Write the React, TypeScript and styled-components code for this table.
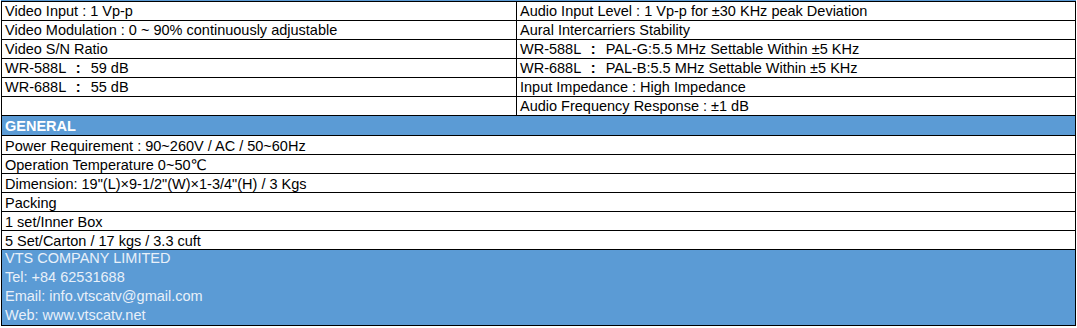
import React from "react";
import styled, { createGlobalStyle } from "styled-components";

const Global = createGlobalStyle`
  html, body { margin: 0; padding: 0; background: #ffffff; }
  body { font-family: "Liberation Sans", "DejaVu Sans", Arial, sans-serif; }
`;

const BLUE = "#5b9bd5";

const Page = styled.div`
  width: 1077px;
  height: 328px;
  background: #ffffff;
  display: flex;
  flex-direction: column;
`;

const TopStrip = styled.div`
  height: 1px;
  width: 1075px;
  margin-left: 1px;
  background: ${BLUE};
`;

const Sheet = styled.div`
  margin-left: 1px;
  width: 1075px;
  box-sizing: border-box;
  border: 1px solid #000;
  display: flex;
  flex-direction: column;
  color: #000;
  font-size: 14.5px;
`;

const TwoCol = styled.div`
  display: grid;
  grid-template-columns: 514px 1fr;
`;

const Cell = styled.div<{ $right?: boolean }>`
  height: 18px;
  line-height: 19px;
  padding-left: 3px;
  white-space: pre;
  overflow: hidden;
  border-bottom: 1px solid #000;
  border-left: ${(p) => (p.$right ? "1px solid #000" : "none")};
`;

const Colon = styled.span`
  font-weight: 700;
  padding: 0 2px;
`;

const Row = styled.div<{ $band?: boolean }>`
  height: ${(p) => (p.$band ? "19px" : "18px")};
  line-height: 20px;
  padding-left: 3px;
  white-space: pre;
  overflow: hidden;
  background: ${(p) => (p.$band ? BLUE : "#fff")};
  color: ${(p) => (p.$band ? "#ffffff" : "#000")};
  font-weight: ${(p) => (p.$band ? 700 : 400)};
  border-bottom: 1px solid #000;
`;

const Contact = styled.div`
  background: ${BLUE};
  color: #e8f0f9;
  padding-left: 3px;
  display: flex;
  flex-direction: column;
  gap: 1px;
`;

const ContactLine = styled.div`
  height: 18px;
  line-height: 17px;
  white-space: pre;
  overflow: hidden;
`;

type Spec = { a: string; b?: string };

const left: Spec[] = [
  { a: "Video Input : 1 Vp-p" },
  { a: "Video Modulation : 0 ~ 90% continuously adjustable" },
  { a: "Video S/N Ratio" },
  { a: "WR-588L  ", b: "  59 dB" },
  { a: "WR-688L  ", b: "  55 dB" },
  { a: "" },
];

const right: Spec[] = [
  { a: "Audio Input Level : 1 Vp-p for ±30 KHz peak Deviation" },
  { a: "Aural Intercarriers Stability" },
  { a: "WR-588L  ", b: "  PAL-G:5.5 MHz Settable Within ±5 KHz" },
  { a: "WR-688L  ", b: "  PAL-B:5.5 MHz Settable Within ±5 KHz" },
  { a: "Input Impedance : High Impedance" },
  { a: "Audio Frequency Response : ±1 dB" },
];

const general = [
  "Power Requirement : 90~260V / AC / 50~60Hz",
  "Operation Temperature 0~50℃",
  "Dimension: 19\"(L)×9-1/2\"(W)×1-3/4\"(H) / 3 Kgs",
  "Packing",
  "1 set/Inner Box",
  "5 Set/Carton / 17 kgs / 3.3 cuft",
];

const contact = [
  "VTS COMPANY LIMITED",
  "Tel: +84 62531688",
  "Email: info.vtscatv@gmail.com",
  "Web: www.vtscatv.net",
];

function Text({ s }: { s: Spec }) {
  if (s.b === undefined) return <>{s.a}</>;
  return (
    <>
      {s.a}
      <Colon>:</Colon>
      {s.b}
    </>
  );
}

export default function App() {
  return (
    <Page>
      <Global />
      <TopStrip />
      <Sheet>
        <TwoCol>
          {left.map((l, i) => (
            <React.Fragment key={i}>
              <Cell>
                <Text s={l} />
              </Cell>
              <Cell $right>
                <Text s={right[i]} />
              </Cell>
            </React.Fragment>
          ))}
        </TwoCol>
        <Row $band>GENERAL</Row>
        {general.map((g) => (
          <Row key={g}>{g}</Row>
        ))}
        <Contact>
          {contact.map((c) => (
            <ContactLine key={c}>{c}</ContactLine>
          ))}
        </Contact>
      </Sheet>
    </Page>
  );
}
